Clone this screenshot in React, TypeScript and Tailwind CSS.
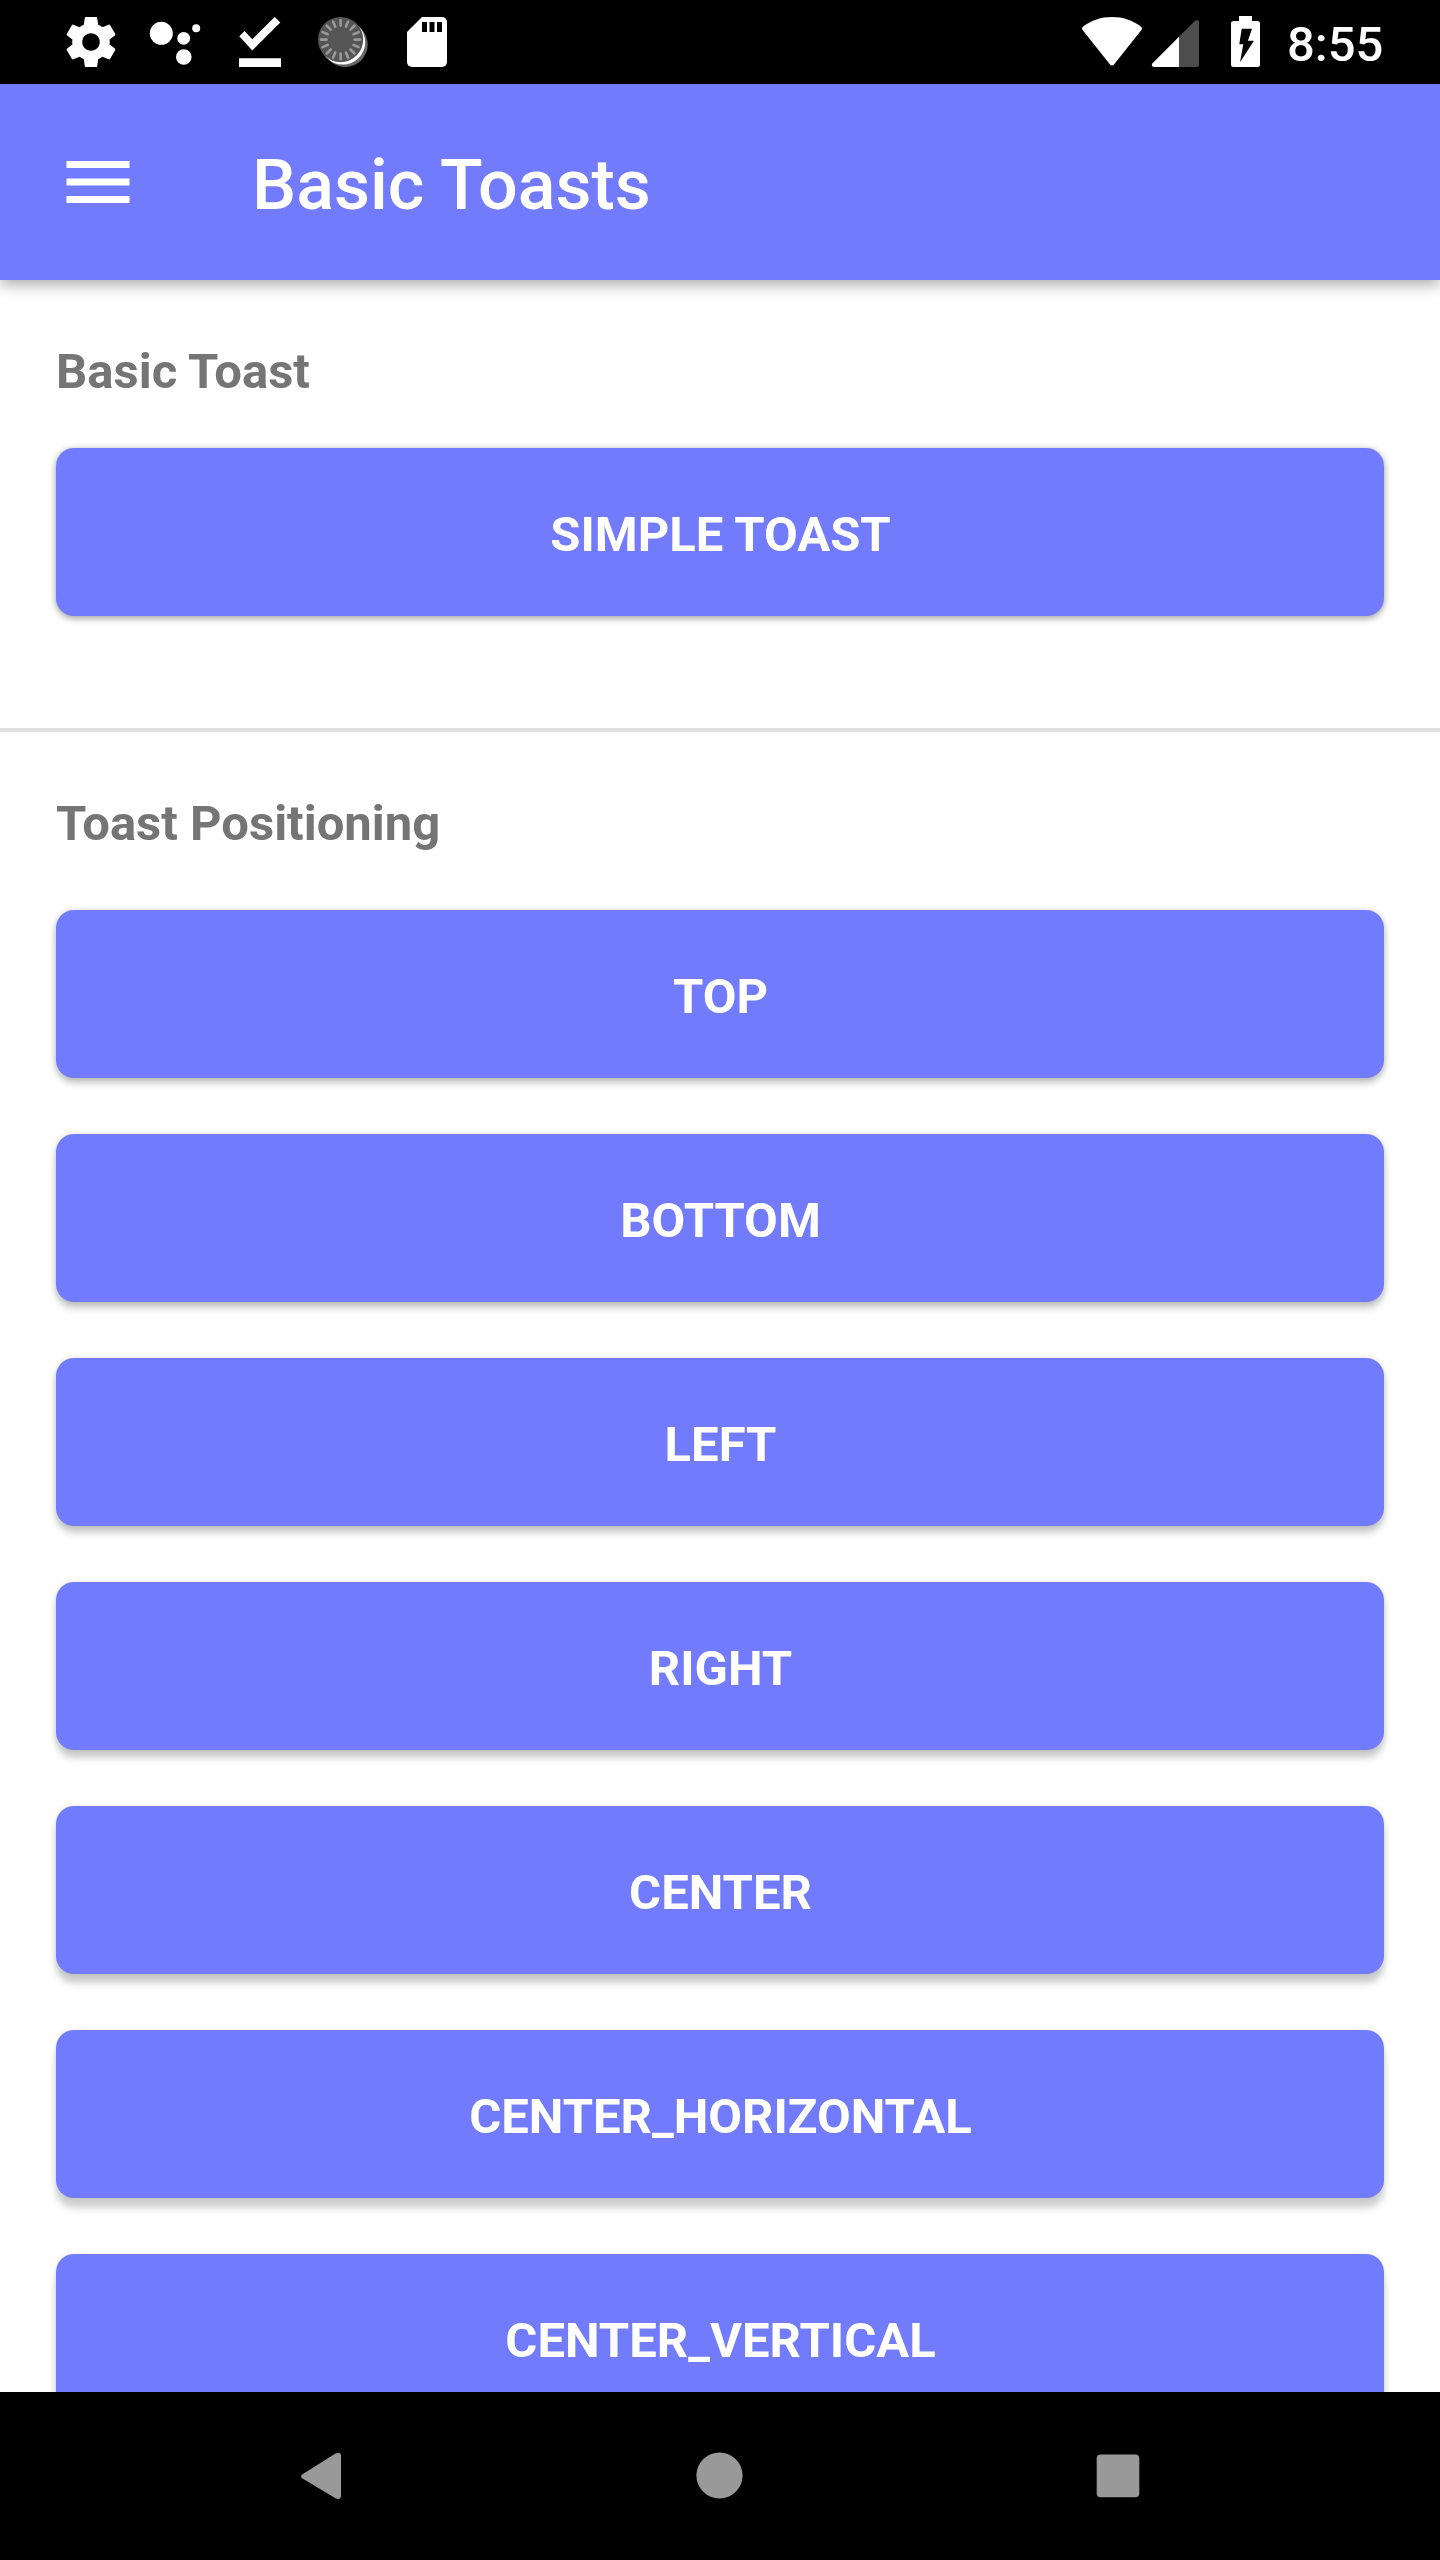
const positions = [
  { label: "TOP", shadow: "shadow-[0_5px_7px_rgba(0,0,0,0.22),0_0_6px_rgba(0,0,0,0.14)]" },
  { label: "BOTTOM", shadow: "shadow-[0_6px_7px_rgba(0,0,0,0.21),0_0_6px_rgba(0,0,0,0.13)]" },
  { label: "LEFT", shadow: "shadow-[0_7px_7px_rgba(0,0,0,0.20),0_0_6px_rgba(0,0,0,0.12)]" },
  { label: "RIGHT", shadow: "shadow-[0_8px_7px_rgba(0,0,0,0.20),0_0_6px_rgba(0,0,0,0.10)]" },
  { label: "CENTER", shadow: "shadow-[0_9px_7px_rgba(0,0,0,0.20),0_0_6px_rgba(0,0,0,0.09)]" },
  { label: "CENTER_HORIZONTAL", shadow: "shadow-[0_10px_7px_rgba(0,0,0,0.19),0_0_6px_rgba(0,0,0,0.07)]" },
  { label: "CENTER_VERTICAL", shadow: "shadow-[0_11px_7px_rgba(0,0,0,0.19),0_0_6px_rgba(0,0,0,0.07)]" },
];

const ticks = Array.from({ length: 16 }, (_, i) => i * 22.5);

function ToastButton({ label, shadow }: { label: string; shadow: string }) {
  return (
    <button
      className={`flex h-[168px] w-full shrink-0 items-center justify-center rounded-[18px] bg-[#717bfb] pt-[5px] pl-px text-[49px] leading-[57px] font-bold text-white ${shadow}`}
    >
      {label}
    </button>
  );
}

function NotificationIcons() {
  return (
    <div className="flex items-center">
      <svg className="h-[60px] w-[60px]" viewBox="0 0 24 24" fill="white">
        <path d="M19.43 12.98c.04-.32.07-.64.07-.98s-.03-.66-.07-.98l2.11-1.65c.19-.15.24-.42.12-.64l-2-3.46c-.12-.22-.39-.3-.61-.22l-2.49 1c-.52-.4-1.08-.73-1.69-.98l-.38-2.65C14.46 2.18 14.25 2 14 2h-4c-.25 0-.46.18-.49.42l-.38 2.65c-.61.25-1.17.59-1.69.98l-2.49-1c-.23-.09-.49 0-.61.22l-2 3.46c-.13.22-.07.49.12.64l2.11 1.65c-.04.32-.07.65-.07.98s.03.66.07.98l-2.11 1.65c-.19.15-.24.42-.12.64l2 3.46c.12.22.39.3.61.22l2.49-1c.52.4 1.08.73 1.69.98l.38 2.65c.03.24.24.42.49.42h4c.25 0 .46-.18.49-.42l.38-2.65c.61-.25 1.17-.59 1.69-.98l2.49 1c.23.09.49 0 .61-.22l2-3.46c.12-.22.07-.49-.12-.64l-2.11-1.65zM12 15.5c-1.93 0-3.5-1.57-3.5-3.5s1.57-3.5 3.5-3.5 3.5 1.57 3.5 3.5-1.57 3.5-3.5 3.5z" />
      </svg>
      <svg className="ml-[24px] h-[60px] w-[60px]" viewBox="145 12 60 60" fill="white">
        <circle cx="161.3" cy="33.3" r="11.5" />
        <circle cx="183.7" cy="38.3" r="6.4" />
        <circle cx="196.2" cy="28.2" r="4" />
        <circle cx="183.8" cy="57" r="7.8" />
      </svg>
      <svg className="ml-[24px] h-[60px] w-[60px]" viewBox="229 12 60 60" fill="white">
        <path d="M239.3 36.2l5.2-5.2 7.8 8.3L274.7 17l5.6 5.6-28 27.9zM239 58.3h42V67h-42z" />
      </svg>
      <svg className="ml-[24px] h-[60px] w-[60px]" viewBox="313 12 60 60">
        <circle cx="345.2" cy="44.5" r="22.5" fill="#666" />
        <circle cx="342.8" cy="42.2" r="22.4" fill="white" />
        <circle cx="340.6" cy="39.6" r="22.6" fill="#555" />
        {ticks.map((angle) => (
          <path
            key={angle}
            d="M340.6 20v5.6"
            transform={`rotate(${angle} 340.6 39.6)`}
            stroke="#999"
            strokeWidth="2.6"
            strokeLinecap="round"
          />
        ))}
      </svg>
      <svg className="ml-[24px] h-[60px] w-[60px]" viewBox="397 12 60 60">
        <path fill="white" d="M422 17h20a5 5 0 0 1 5 5v40a5 5 0 0 1-5 5h-30a5 5 0 0 1-5-5V32z" />
        <path fill="black" d="M422 22h5v10h-5zM429.5 22h5v10h-5zM437 22h5v10h-5z" />
      </svg>
    </div>
  );
}

function SystemIcons() {
  return (
    <div className="flex items-center">
      <svg className="h-[60px] w-[64px]" viewBox="1080 12 64 60" fill="white">
        <path d="M1083 30.6c-1.4-1.5-1.3-3 .2-4.1C1091.500 20.300 1101 17 1112 17s20.500 3.300 28.800 9.500c1.500 1.100 1.600 2.600.2 4.100L1114.200 64.200q-2.200 2.600-4.400 0z" />
      </svg>
      <svg className="ml-[6px] h-[60px] w-[52px]" viewBox="1150 12 52 60">
        <path fill="#4d4d4d" d="M1179 36.800L1195 20.800q4-2.300 4 2V64.500q0 2.500-2.500 2.500H1179z" />
        <path fill="white" d="M1179 36.800V67h-25q-3.500-.5-1.500-3.700z" />
      </svg>
      <svg className="ml-[26px] h-[60px] w-[34px]" viewBox="1228 12 34 60">
        <path fill="white" d="M1239 16h13v5h5.500q2.500 0 2.500 2.500v41q0 2.500-2.500 2.500h-24q-2.500 0-2.500-2.500v-41q0-2.500 2.500-2.500h5.500z" />
        <path fill="black" d="M1241.700 28.700h10.300l-4.100 12h6.100L1240 62.300l3.300-18h-4z" />
      </svg>
      <span className="ml-[25px] w-[97px] pt-[5px] text-[49px] leading-[57px] font-medium whitespace-nowrap text-white">8:55</span>
    </div>
  );
}

export default function App() {
  return (
    <div className="flex h-[2560px] w-[1440px] flex-col overflow-hidden bg-white font-[Roboto,sans-serif]">
      <div className="flex h-[84px] shrink-0 items-center justify-between bg-black pr-[56px] pl-[61px]">
        <NotificationIcons />
        <SystemIcons />
      </div>
      <header className="z-10 flex h-[196px] shrink-0 items-center bg-[#717bfb] pl-[66px] shadow-[0_5px_14px_rgba(0,0,0,0.32)]">
        <svg className="h-[42px] w-[64px]" viewBox="0 0 64 42" fill="white">
          <path d="M.5 0h63v7H.5zM.5 17.500h63v7H.5zM.5 35h63v7H.5z" />
        </svg>
        <h1 className="ml-[122px] pt-[6px] text-[70px] leading-[82px] font-medium text-white">Basic Toasts</h1>
      </header>
      <main className="flex min-h-0 flex-1 flex-col overflow-hidden">
        <section className="flex h-[448px] shrink-0 flex-col px-14">
          <h2 className="mt-[63px] h-[57px] text-[49px] leading-[57px] font-bold text-[#757575]">Basic Toast</h2>
          <div className="mt-[48px]">
            <ToastButton
              label="SIMPLE TOAST"
              shadow="shadow-[0_3px_7px_rgba(0,0,0,0.28),0_0_6px_rgba(0,0,0,0.15)]"
            />
          </div>
        </section>
        <hr className="h-1 shrink-0 border-0 bg-[#e0e0e0]" />
        <section className="flex flex-col px-14">
          <h2 className="mt-[63px] h-[57px] shrink-0 text-[49px] leading-[57px] font-bold text-[#757575]">Toast Positioning</h2>
          <div className="mt-[58px] flex flex-col gap-14">
            {positions.map((item) => (
              <ToastButton key={item.label} label={item.label} shadow={item.shadow} />
            ))}
          </div>
        </section>
      </main>
      <nav className="z-10 flex h-[168px] shrink-0 items-center justify-center gap-[338px] bg-black">
        <svg className="h-[60px] w-[60px]" viewBox="0 0 60 60" fill="#999">
          <path d="M10.500 28.300L43.500 7.500Q49 5 49 10V49.500Q49 54.500 43.500 52.300L10.500 32.500Q7.500 30.400 10.500 28.300z" />
        </svg>
        <svg className="h-[60px] w-[60px]" viewBox="0 0 60 60" fill="#999">
          <circle cx="29.500" cy="29.500" r="23.100" />
        </svg>
        <svg className="h-[60px] w-[60px]" viewBox="0 0 60 60" fill="#999">
          <rect x="8.700" y="8.500" width="42.600" height="42.800" rx="4" />
        </svg>
      </nav>
    </div>
  );
}
